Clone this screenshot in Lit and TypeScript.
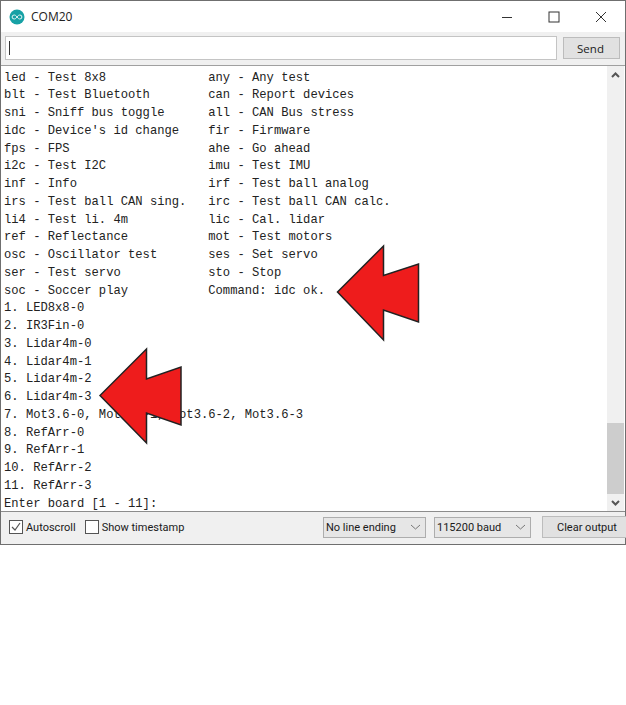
import { LitElement, html, css, svg } from "lit";
import { customElement } from "lit/decorators.js";

const OUTPUT = `led - Test 8x8              any - Any test
blt - Test Bluetooth        can - Report devices
sni - Sniff bus toggle      all - CAN Bus stress
idc - Device's id change    fir - Firmware
fps - FPS                   ahe - Go ahead
i2c - Test I2C              imu - Test IMU
inf - Info                  irf - Test ball analog
irs - Test ball CAN sing.   irc - Test ball CAN calc.
li4 - Test li. 4m           lic - Cal. lidar
ref - Reflectance           mot - Test motors
osc - Oscillator test       ses - Set servo
ser - Test servo            sto - Stop
soc - Soccer play           Command: idc ok.
1. LED8x8-0
2. IR3Fin-0
3. Lidar4m-0
4. Lidar4m-1
5. Lidar4m-2
6. Lidar4m-3
7. Mot3.6-0, Mot3.6-1, Mot3.6-2, Mot3.6-3
8. RefArr-0
9. RefArr-1
10. RefArr-2
11. RefArr-3
Enter board [1 - 11]:`;

const arrows = [
  "337.5,292 383.5,246 383.5,275.5 418.5,264 418.5,322 383.5,310 383.5,340",
  "100,395.5 146.5,349 146.5,379 181,367 181,425 146.5,413 146.5,443",
];

@customElement("app-root")
export class AppRoot extends LitElement {
  static styles = css`
    :host {
      display: block;
      position: relative;
      width: 626px;
      height: 705px;
      background: #fff;
      font-family: "Open Sans", "Liberation Sans", sans-serif;
      font-size: 11.5px;
      color: #1a1a1a;
      overflow: hidden;
    }
    .window {
      box-sizing: border-box;
      width: 626px;
      height: 545px;
      border: 1px solid #6f6f6f;
      display: flex;
      flex-direction: column;
      background: #f0f0f0;
    }
    .title {
      height: 31px;
      flex: none;
      background: #fff;
      display: flex;
      align-items: center;
      padding: 0 1px 0 8px;
    }
    .logo {
      margin-right: 6px;
    }
    .title-text {
      flex: 1;
      font-size: 12px;
      color: #222;
    }
    .ctl {
      width: 47px;
      height: 31px;
      display: flex;
      align-items: center;
      justify-content: center;
    }
    .send-row {
      height: 33px;
      flex: none;
      box-sizing: border-box;
      display: flex;
      align-items: center;
      padding: 0 5px 1px 4px;
      gap: 6px;
    }
    .input {
      flex: 1;
      height: 24px;
      box-sizing: border-box;
      background: #fff;
      border: 1px solid #c4c4c4;
      display: flex;
      align-items: center;
      padding-left: 3px;
    }
    .caret {
      width: 1px;
      height: 14px;
      background: #333;
    }
    .btn {
      box-sizing: border-box;
      border: 1px solid #bcbcbc;
      background: #e1e1e1;
      display: flex;
      align-items: center;
      justify-content: center;
    }
    .send {
      width: 57px;
      height: 22px;
      padding-right: 2px;
    }
    .main {
      flex: 1;
      min-height: 0;
      display: flex;
      background: #fff;
      border-top: 1px solid #a0a0a0;
      border-bottom: 1px solid #8c8c8c;
    }
    pre {
      flex: 1;
      margin: 0;
      padding: 3.6px 0 0 3px;
      font-family: "Liberation Mono", "DejaVu Sans Mono", monospace;
      font-size: 12.16px;
      line-height: 17.75px;
      color: #222;
      overflow: hidden;
    }
    .scroll {
      width: 17px;
      margin-right: 1px;
      flex: none;
      background: #f0f0f0;
      display: flex;
      flex-direction: column;
    }
    .sb-btn {
      height: 17px;
      flex: none;
      display: flex;
      align-items: center;
      justify-content: center;
    }
    .track {
      flex: 1;
      display: flex;
      flex-direction: column;
      justify-content: flex-end;
    }
    .thumb {
      height: 71px;
      background: #cdcdcd;
    }
    .bottom {
      height: 32px;
      flex: none;
      box-sizing: border-box;
      display: flex;
      align-items: center;
      padding: 0 0 2px 8px;
      font-family: Roboto, "Open Sans", sans-serif;
      font-size: 11px;
    }
    .check {
      display: flex;
      align-items: center;
      gap: 3px;
      margin-right: 9px;
    }
    .box {
      width: 14px;
      height: 14px;
      box-sizing: border-box;
      border: 1px solid #555;
      background: #fff;
      display: flex;
      align-items: center;
      justify-content: center;
    }
    .spacer {
      flex: 1;
    }
    .select {
      box-sizing: border-box;
      height: 21px;
      border: 1px solid #adadad;
      background: #e6e6e6;
      display: flex;
      align-items: center;
      justify-content: space-between;
      padding: 0 4px 0 2px;
      margin-right: 8px;
    }
    .line {
      width: 103px;
    }
    .baud {
      width: 97px;
      margin-right: 11px;
    }
    .clear {
      width: 84px;
      height: 22px;
      margin-right: -1px;
      justify-content: flex-start;
      padding-left: 14px;
      border-right: none;
    }
    .arrows {
      position: absolute;
      inset: 0;
      pointer-events: none;
    }
  `;

  private chevron() {
    return html`<svg width="11" height="6" viewBox="0 0 11 6">
      <path d="M1 1l4.5 4L10 1" fill="none" stroke="#777" stroke-width="1" />
    </svg>`;
  }

  render() {
    return html`
      <div class="window">
        <div class="title">
          <svg class="logo" width="16" height="16" viewBox="0 0 16 16">
            <circle cx="8" cy="8" r="7.5" fill="#17a1a5" />
            <path
              d="M8 8c-1-1.6-2-2-2.9-2a2 2 0 0 0 0 4c.9 0 1.9-.4 2.9-2c1-1.6 2-2 2.9-2a2 2 0 0 1 0 4c-.9 0-1.9-.4-2.9-2z"
              fill="none"
              stroke="#e6f6f6"
              stroke-width="1"
            />
          </svg>
          <span class="title-text">COM20</span>
          <div class="ctl">
            <svg width="12" height="12" viewBox="0 0 12 12"><path d="M1 6.5h10" stroke="#333" /></svg>
          </div>
          <div class="ctl">
            <svg width="12" height="12" viewBox="0 0 12 12">
              <rect x="1" y="1" width="10" height="10" fill="none" stroke="#333" />
            </svg>
          </div>
          <div class="ctl">
            <svg width="12" height="12" viewBox="0 0 12 12">
              <path d="M1 1l10 10M11 1L1 11" stroke="#333" fill="none" />
            </svg>
          </div>
        </div>
        <div class="send-row">
          <div class="input"><span class="caret"></span></div>
          <div class="btn send">Send</div>
        </div>
        <div class="main">
          <pre>${OUTPUT}</pre>
          <div class="scroll">
            <div class="sb-btn">
              <svg width="9" height="6" viewBox="0 0 9 6">
                <path d="M1 5l3.5-3.5L8 5" fill="none" stroke="#555" stroke-width="2" />
              </svg>
            </div>
            <div class="track"><div class="thumb"></div></div>
            <div class="sb-btn">
              <svg width="9" height="6" viewBox="0 0 9 6">
                <path d="M1 1l3.5 3.5L8 1" fill="none" stroke="#555" stroke-width="2" />
              </svg>
            </div>
          </div>
        </div>
        <div class="bottom">
          <label class="check">
            <span class="box">
              <svg width="12" height="12" viewBox="0 0 12 12">
                <path d="M2 6l3 3 5-7" fill="none" stroke="#555" stroke-width="1.2" />
              </svg>
            </span>
            Autoscroll
          </label>
          <label class="check"><span class="box"></span>Show timestamp</label>
          <div class="spacer"></div>
          <div class="select line">No line ending ${this.chevron()}</div>
          <div class="select baud">115200 baud ${this.chevron()}</div>
          <div class="btn clear">Clear output</div>
        </div>
      </div>
      <svg class="arrows" width="626" height="705" viewBox="0 0 626 705">
        ${arrows.map(
          (p) => svg`<polygon points=${p} fill="#ee1c1c" stroke="#222" stroke-width="1.5" />`
        )}
      </svg>
    `;
  }
}
